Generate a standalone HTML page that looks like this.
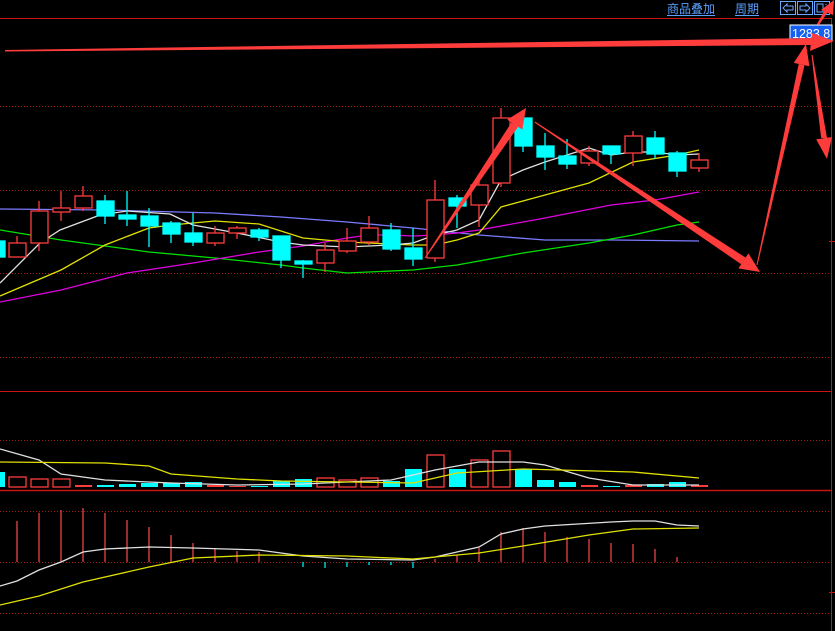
<!DOCTYPE html>
<html><head><meta charset="utf-8"><style>
html,body{margin:0;padding:0;background:#000;width:835px;height:631px;overflow:hidden}
svg{display:block}
text{font-family:"Liberation Sans","Noto Sans CJK SC",sans-serif}
</style></head><body>
<svg width="835" height="631" viewBox="0 0 835 631" xmlns="http://www.w3.org/2000/svg">
<rect width="835" height="631" fill="#000"/>
<!-- grid -->
<g stroke="#a01010" stroke-width="1" fill="none">
<line x1="0" y1="18.5" x2="832" y2="18.5" stroke="#c81414"/>
<line x1="0" y1="391.5" x2="832" y2="391.5" stroke="#c81414"/>
<line x1="0" y1="490.5" x2="832" y2="490.5" stroke="#c81414" stroke-width="1.5"/>
<line x1="831.5" y1="18" x2="831.5" y2="631" stroke="#c81414"/>
<g stroke-dasharray="1 2" stroke="#a01818">
<line x1="0" y1="106.5" x2="830" y2="106.5"/>
<line x1="0" y1="190.5" x2="830" y2="190.5"/>
<line x1="0" y1="273.5" x2="830" y2="273.5"/>
<line x1="0" y1="357.5" x2="830" y2="357.5"/>
<line x1="0" y1="440.5" x2="830" y2="440.5"/>
<line x1="0" y1="511.5" x2="830" y2="511.5"/>
<line x1="0" y1="562.5" x2="830" y2="562.5"/>
<line x1="0" y1="613.5" x2="830" y2="613.5"/>
</g>
<line x1="829" y1="241.5" x2="835" y2="241.5" stroke="#c81414"/>
<line x1="829" y1="592.5" x2="835" y2="592.5" stroke="#c81414"/>
</g>
<!-- MA lines -->
<g fill="none" stroke-width="1.3">
<polyline stroke="#7b7bff" points="0,209 105,210 215,213 281,217 347,222 413,228 479,235 545,240 611,240 699,241"/>
<polyline stroke="#00e000" points="0,230 61,240 149,252 215,258 281,265 303,268 347,273 413,270 457,265 523,253 589,243 633,235 677,225 699,222"/>
<polyline stroke="#e000e0" points="0,302 61,290 127,273 193,263 259,252 303,246 347,238 369,235 391,235 413,236 435,235 457,233 479,230 545,218 611,205 655,200 699,192"/>
<polyline stroke="#e0e000" points="0,296 61,270 105,245 149,228 171,225 215,221 259,224 303,238 347,242 391,244 413,245 435,245 457,240 479,233 501,207 545,195 589,183 633,162 677,155 699,150"/>
<polyline stroke="#e0e0e0" points="0,283 40,243 60,230 100,215 127,211 170,214 193,225 237,233 281,242 303,245 347,247 391,245 413,243 435,235 457,230 479,220 501,180 523,170 545,162 567,155 589,148 611,155 633,152 655,152 677,155 699,154"/>
</g>
<!-- candles -->
<g stroke-width="1.3">
<g stroke="#ff3c3c" fill="none">
<line x1="17" y1="236" x2="17" y2="243"/><rect x="9" y="243" width="17" height="14"/>
<line x1="39" y1="201" x2="39" y2="251"/><rect x="31" y="211" width="17" height="32" fill="#000"/>
<line x1="61" y1="191" x2="61" y2="221"/><rect x="53" y="208" width="17" height="4" fill="#000"/>
<line x1="83" y1="186" x2="83" y2="211"/><rect x="75" y="196" width="17" height="12" fill="#000"/>
<line x1="215" y1="226" x2="215" y2="246"/><rect x="207" y="233" width="17" height="10" fill="#000"/>
<line x1="237" y1="226" x2="237" y2="239"/><rect x="229" y="228" width="17" height="5" fill="#000"/>
<line x1="325" y1="243" x2="325" y2="272"/><rect x="317" y="250" width="17" height="13" fill="#000"/>
<line x1="347" y1="228" x2="347" y2="253"/><rect x="339" y="241" width="17" height="10" fill="#000"/>
<line x1="369" y1="216" x2="369" y2="245"/><rect x="361" y="228" width="17" height="14" fill="#000"/>
<line x1="435" y1="180" x2="435" y2="262"/><rect x="427" y="200" width="17" height="58" fill="#000"/>
<line x1="479" y1="180" x2="479" y2="227"/><rect x="471" y="185" width="17" height="20" fill="#000"/>
<line x1="501" y1="108" x2="501" y2="187"/><rect x="493" y="118" width="17" height="65" fill="#000"/>
<line x1="589" y1="146" x2="589" y2="166"/><rect x="581" y="151" width="17" height="12" fill="#000"/>
<line x1="633" y1="131" x2="633" y2="166"/><rect x="625" y="136" width="17" height="17" fill="#000"/>
<line x1="699" y1="153" x2="699" y2="172"/><rect x="691" y="160" width="17" height="8" fill="#000"/>
</g>
<g stroke="#00ffff" fill="#00ffff">
<rect x="0" y="241" width="5" height="16"/>
<line x1="105" y1="195" x2="105" y2="224"/><rect x="97" y="201" width="17" height="15"/>
<line x1="127" y1="191" x2="127" y2="226"/><rect x="119" y="215" width="17" height="4"/>
<line x1="149" y1="208" x2="149" y2="247"/><rect x="141" y="216" width="17" height="10"/>
<line x1="171" y1="221" x2="171" y2="243"/><rect x="163" y="223" width="17" height="11"/>
<line x1="193" y1="213" x2="193" y2="246"/><rect x="185" y="233" width="17" height="9"/>
<line x1="259" y1="228" x2="259" y2="241"/><rect x="251" y="230" width="17" height="7"/>
<line x1="281" y1="236" x2="281" y2="268"/><rect x="273" y="236" width="17" height="24"/>
<line x1="303" y1="260" x2="303" y2="278"/><rect x="295" y="261" width="17" height="3"/>
<line x1="391" y1="223" x2="391" y2="251"/><rect x="383" y="230" width="17" height="19"/>
<line x1="413" y1="228" x2="413" y2="266"/><rect x="405" y="248" width="17" height="11"/>
<line x1="457" y1="195" x2="457" y2="228"/><rect x="449" y="198" width="17" height="8"/>
<line x1="523" y1="110" x2="523" y2="152"/><rect x="515" y="118" width="17" height="28"/>
<line x1="545" y1="133" x2="545" y2="170"/><rect x="537" y="146" width="17" height="11"/>
<line x1="567" y1="139" x2="567" y2="169"/><rect x="559" y="156" width="17" height="8"/>
<line x1="611" y1="146" x2="611" y2="164"/><rect x="603" y="146" width="17" height="8"/>
<line x1="655" y1="131" x2="655" y2="159"/><rect x="647" y="138" width="17" height="16"/>
<line x1="677" y1="151" x2="677" y2="177"/><rect x="669" y="153" width="17" height="18"/>
</g>
</g>
<!-- volume -->
<g stroke-width="1.3">
<g fill="#00ffff">
<rect x="0" y="472" width="5" height="15"/>
<rect x="97" y="485" width="17" height="2"/><rect x="119" y="484" width="17" height="3"/>
<rect x="141" y="483" width="17" height="4"/><rect x="163" y="483" width="17" height="4"/>
<rect x="185" y="482" width="17" height="5"/><rect x="251" y="486" width="17" height="1"/>
<rect x="273" y="481" width="17" height="6"/><rect x="295" y="479" width="17" height="8"/>
<rect x="383" y="481" width="17" height="6"/><rect x="405" y="469" width="17" height="18"/>
<rect x="449" y="469" width="17" height="18"/><rect x="515" y="469" width="17" height="18"/>
<rect x="537" y="480" width="17" height="7"/><rect x="559" y="482" width="17" height="5"/>
<rect x="603" y="486" width="17" height="1"/><rect x="647" y="484" width="17" height="3"/>
<rect x="669" y="482" width="17" height="5"/>
</g>
<g fill="#ff3c3c">
<rect x="75" y="485" width="17" height="2"/><rect x="207" y="485" width="17" height="2"/>
<rect x="229" y="486" width="17" height="1"/><rect x="581" y="485" width="17" height="2"/>
<rect x="625" y="485" width="17" height="2"/><rect x="691" y="485" width="17" height="2"/>
</g>
<g fill="none" stroke="#ff3c3c">
<rect x="9" y="477" width="17" height="10"/><rect x="31" y="479" width="17" height="8"/>
<rect x="53" y="479" width="17" height="8"/><rect x="317" y="478" width="17" height="9"/>
<rect x="339" y="480" width="17" height="7"/><rect x="361" y="478" width="17" height="9"/>
<rect x="427" y="455" width="17" height="32"/><rect x="471" y="460" width="17" height="27"/>
<rect x="493" y="451" width="17" height="36"/>
</g>
<polyline fill="none" stroke="#e0e0e0" points="0,449 39,460 61,474 105,480 171,483 237,485 303,484 391,480 435,470 479,462 523,462 545,465 589,478 633,485 699,485"/>
<polyline fill="none" stroke="#e0e000" points="0,462 105,463 149,466 171,474 237,479 281,481 413,483 457,473 523,469 633,472 699,478"/>
</g>
<!-- MACD -->
<g stroke="#ff4a4a" stroke-width="1.2">
<line x1="17" y1="521" x2="17" y2="562"/><line x1="39" y1="513" x2="39" y2="562"/>
<line x1="61" y1="510" x2="61" y2="562"/><line x1="83" y1="508" x2="83" y2="562"/>
<line x1="105" y1="513" x2="105" y2="562"/><line x1="127" y1="520" x2="127" y2="562"/>
<line x1="149" y1="527" x2="149" y2="562"/><line x1="171" y1="535" x2="171" y2="562"/>
<line x1="193" y1="543" x2="193" y2="562"/><line x1="215" y1="548" x2="215" y2="562"/>
<line x1="237" y1="551" x2="237" y2="562"/><line x1="259" y1="552" x2="259" y2="562"/>
<line x1="435" y1="559" x2="435" y2="562"/><line x1="457" y1="555" x2="457" y2="562"/>
<line x1="479" y1="548" x2="479" y2="562"/><line x1="501" y1="532" x2="501" y2="562"/>
<line x1="523" y1="528" x2="523" y2="562"/><line x1="545" y1="532" x2="545" y2="562"/>
<line x1="567" y1="537" x2="567" y2="562"/><line x1="589" y1="539" x2="589" y2="562"/>
<line x1="611" y1="543" x2="611" y2="562"/><line x1="633" y1="544" x2="633" y2="562"/>
<line x1="655" y1="549" x2="655" y2="562"/><line x1="677" y1="557" x2="677" y2="562"/>
</g>
<g stroke="#00ffff" stroke-width="1.2">
<line x1="303" y1="562" x2="303" y2="567"/><line x1="325" y1="562" x2="325" y2="568"/>
<line x1="347" y1="562" x2="347" y2="567"/><line x1="369" y1="562" x2="369" y2="565"/>
<line x1="391" y1="562" x2="391" y2="565"/><line x1="413" y1="562" x2="413" y2="568"/>
</g>
<polyline fill="none" stroke="#e0e0e0" stroke-width="1.3" points="0,586 17,581 39,570 61,562 83,552 105,549 149,547 193,548 259,550 303,556 347,559 413,560 435,557 479,547 501,534 523,529 545,526 611,522 633,521 655,521 677,525 699,526"/>
<polyline fill="none" stroke="#e0e000" stroke-width="1.3" points="0,605 39,596 83,582 149,567 193,558 259,555 347,556 413,559 457,555 479,553 523,546 589,535 633,529 699,528"/>
<!-- top bar -->
<g fill="#5aa0ff" font-size="12">
<text x="667" y="13">商品叠加</text>
<line x1="667" y1="15.5" x2="715" y2="15.5" stroke="#5aa0ff"/>
<text x="735" y="13">周期</text>
<line x1="735" y1="15.5" x2="759" y2="15.5" stroke="#5aa0ff"/>
</g>
<g fill="none" stroke="#6aa8ff" stroke-width="1">
<rect x="780.5" y="1.5" width="15" height="13"/>
<rect x="797.5" y="1.5" width="15" height="13"/>
<rect x="814.5" y="1.5" width="15" height="13"/>
<path d="M783 8 L787 4 L787 6 L793 6 L793 10 L787 10 L787 12 Z"/>
<path d="M810 8 L806 4 L806 6 L800 6 L800 10 L806 10 L806 12 Z"/>
<path d="M817 4 L823 4 L823 12 L817 12 Z M826 4 L826 5 M826 7 L826 8 M826 10 L826 11"/>
</g>
<rect x="790" y="25" width="42" height="16" fill="#1560f0" stroke="#fff" stroke-width="1"/>
<text x="792" y="38" fill="#fff" font-size="12.5">1283.8</text>
<!-- arrows -->
<g fill="#ff3c3c">
<polygon points="5,50 812,38 812,45 5,51.5"/>
<polygon points="812,33 834,41 810,51"/>
<polygon points="424.6,257.7 425.4,258.3 518.1,126.8 511.5,122.4"/>
<polygon points="507.3,119.6 526,108 522.3,129.6"/>
<polygon points="535,121.5 534.6,122.6 741.2,264.2 745.6,257.6"/>
<polygon points="738.4,268.4 760,272 748.4,253.4"/>
<polygon points="756.5,265 757.5,265 804.5,65.2 798.7,64"/>
<polygon points="793.8,62.9 806,44 809.4,66.3"/>
<polygon points="811.5,55 812.5,55 827.1,138.6 821.1,137.8"/>
<polygon points="816.2,139.4 827,159 832,137"/>
<polygon points="817,24 819,25 829,10 826,8"/>
<polygon points="821,10 834,0 833,15"/>
</g>
</svg>
</body></html>
